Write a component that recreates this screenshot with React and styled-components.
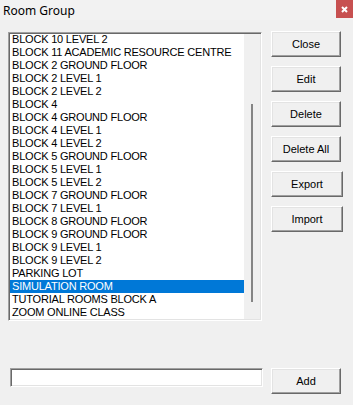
import React from "react";
import styled, { createGlobalStyle } from "styled-components";

const GlobalStyle = createGlobalStyle`
  html, body {
    margin: 0;
    padding: 0;
    background: #f0f0f0;
  }
`;

const rooms = [
  "BLOCK 10 LEVEL 2",
  "BLOCK 11 ACADEMIC RESOURCE CENTRE",
  "BLOCK 2 GROUND FLOOR",
  "BLOCK 2 LEVEL 1",
  "BLOCK 2 LEVEL 2",
  "BLOCK 4",
  "BLOCK 4 GROUND FLOOR",
  "BLOCK 4 LEVEL 1",
  "BLOCK 4 LEVEL 2",
  "BLOCK 5 GROUND FLOOR",
  "BLOCK 5 LEVEL 1",
  "BLOCK 5 LEVEL 2",
  "BLOCK 7 GROUND FLOOR",
  "BLOCK 7 LEVEL 1",
  "BLOCK 8 GROUND FLOOR",
  "BLOCK 9 GROUND FLOOR",
  "BLOCK 9 LEVEL 1",
  "BLOCK 9 LEVEL 2",
  "PARKING LOT",
  "SIMULATION ROOM",
  "TUTORIAL ROOMS BLOCK A",
  "ZOOM ONLINE CLASS",
];

const buttons = [
  { label: "Close" },
  { label: "Edit" },
  { label: "Delete" },
  { label: "Delete All" },
  { label: "Export", wide: true },
  { label: "Import", wide: true },
];

const App = () => {
  const selected = "SIMULATION ROOM";

  return (
    <Window>
      <GlobalStyle />
      <TitleBar>
        <Title>Room Group</Title>
        <CloseX>
          <svg width="7" height="7" viewBox="0 0 7 7">
            <path d="M1 1 L6 6 M6 1 L1 6" stroke="#fff" strokeWidth="2" />
          </svg>
        </CloseX>
      </TitleBar>

      <Main>
        <ListBox>
          <Items>
            {rooms.map((room) => (
              <Item key={room} selected={room === selected}>
                {room}
              </Item>
            ))}
          </Items>
          <ScrollTrack>
            <Thumb />
          </ScrollTrack>
        </ListBox>

        <ButtonColumn>
          {buttons.map((b) => (
            <Button key={b.label} wide={b.wide}>
              {b.label}
            </Button>
          ))}
        </ButtonColumn>
      </Main>

      <BottomRow>
        <TextInput type="text" />
        <Button>Add</Button>
      </BottomRow>
    </Window>
  );
};

const Window = styled.div`
  width: 353px;
  height: 405px;
  background: #f0f0f0;
  display: flex;
  flex-direction: column;
  overflow: hidden;
  font-family: "Liberation Sans", Arial, sans-serif;
`;

const TitleBar = styled.div`
  height: 20px;
  display: flex;
  align-items: flex-start;
  justify-content: space-between;
  background: #f2f2f2;
`;

const Title = styled.div`
  font-family: "Noto Sans", "Open Sans", sans-serif;
  font-size: 12px;
  color: #000;
  padding: 3px 0 0 3px;
  line-height: 16px;
`;

const CloseX = styled.div`
  width: 17px;
  height: 18px;
  background: #c75050;
  display: flex;
  align-items: center;
  justify-content: center;
`;

const Main = styled.div`
  display: flex;
  padding: 11px 0 0 8px;
`;

const ListBox = styled.div`
  margin-top: 1px;
  width: 254px;
  height: 289px;
  box-sizing: border-box;
  background: #fff;
  border: 1px solid;
  border-color: #a0a0a0 #fff #fff #a0a0a0;
  box-shadow: inset 1px 1px #696969, inset -1px -1px #e3e3e3;
  display: flex;
  overflow: hidden;
`;

const Items = styled.div`
  flex: 1;
  padding: 0 0 0 1px;
  overflow: hidden;
`;

const Item = styled.div`
  height: 13px;
  line-height: 13px;
  font-size: 11px;
  letter-spacing: -0.2px;
  padding-left: 2px;
  white-space: nowrap;
  color: ${(p) => (p.selected ? "#fff" : "#000")};
  background: ${(p) => (p.selected ? "#0078d7" : "transparent")};
`;

const ScrollTrack = styled.div`
  width: 16px;
  margin: 1px 1px 1px 0;
  background: #f0f0f0;
  display: flex;
  flex-direction: column;
`;

const Thumb = styled.div`
  width: 2px;
  height: 198px;
  margin: 70px 0 0 7px;
  background: #858585;
`;

const ButtonColumn = styled.div`
  display: flex;
  flex-direction: column;
  gap: 9px;
  margin-left: 9px;
`;

const Button = styled.button`
  width: ${(p) => (p.wide ? "72px" : "70px")};
  height: 26px;
  box-sizing: border-box;
  padding: 0;
  background: #f0f0f0;
  border: 1px solid;
  border-color: #fff #696969 #696969 #fff;
  box-shadow: inset -1px -1px #a0a0a0, inset 1px 1px #e3e3e3;
  font-family: "Liberation Sans", Arial, sans-serif;
  font-size: 11px;
  color: #000;
  flex-shrink: 0;
`;

const BottomRow = styled.div`
  display: flex;
  align-items: flex-start;
  gap: 8px;
  margin-top: 47px;
  padding-left: 10px;
`;

const TextInput = styled.input`
  width: 253px;
  height: 19px;
  box-sizing: border-box;
  margin: 0;
  padding: 0 2px;
  background: #fff;
  border: 1px solid;
  border-color: #a0a0a0 #fff #fff #a0a0a0;
  box-shadow: inset 1px 1px #696969, inset -1px -1px #e3e3e3;
  outline: none;
`;

export default App;
